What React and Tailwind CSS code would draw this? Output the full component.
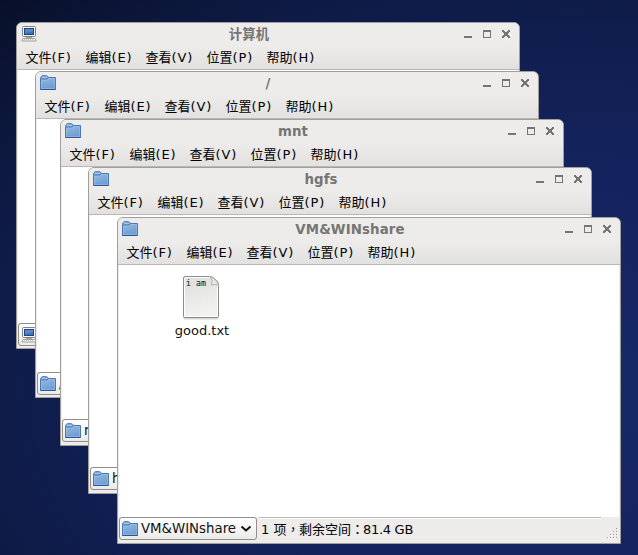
import React from "react";

function FolderIcon() {
  return (
    <svg width="18" height="18" viewBox="0 0 18 18" className="shrink-0">
      <defs>
        <linearGradient id="folder" x1="0" y1="0" x2="0.4" y2="1">
          <stop offset="0" stopColor="#97bae2" />
          <stop offset="1" stopColor="#6f9dd1" />
        </linearGradient>
      </defs>
      <path d="M1.500 6V3.200L3.300 1.500h4L9.500 3v3" fill="#7fa5d3" stroke="#5c88c0" />
      <path d="M3 3.500h5" stroke="#a9c5e6" />
      <path d="M1.500 15.500V5.500l1-.5h5.500L9.500 3.500h7v12z" fill="url(#folder)" stroke="#4a78b5" />
      <path d="M2.500 14.500V6.200h6L10 4.500h5.500v10z" fill="none" stroke="#b0cbea" strokeOpacity=".4" />
      <path d="M1.500 15.500h15" stroke="#2a5596" />
    </svg>
  );
}

function ComputerIcon() {
  return (
    <svg width="18" height="18" viewBox="0 0 18 18" className="shrink-0">
      <rect x="2.500" y="1.500" width="13" height="10" rx="1" fill="#f4f4f2" stroke="#80827d" />
      <rect x="4.500" y="3.500" width="9" height="6" fill="#3f70b3" stroke="#1c468a" />
      <path d="M5 4h8v2.500L5 8z" fill="#5a86c2" />
      <path d="M6 12.500h6" stroke="#a4a6a1" />
      <path d="M3 13.500h12l1 1.500v1h-14v-1z" fill="#f2f2f0" stroke="#a0a29d" />
      <path d="M4 14.500h10" stroke="#c4c6c1" strokeDasharray="1 1" />
    </svg>
  );
}

function WindowButtons() {
  return (
    <svg width="50" height="12" viewBox="0 0 50 12" className="shrink-0" shapeRendering="crispEdges" fill="#757573">
      <path d="M1 8h8v2H1z" />
      <path fillRule="evenodd" d="M20 2h8v8h-8zM21 4v5h6V4z" />
      <path d="M39 2h2v1h1v1h2V3h1V2h2v2h-1v1h-1v2h1v1h1v2h-2V9h-1V8h-2v1h-1v1h-2V8h1V7h1V5h-1V4h-1z" />
    </svg>
  );
}

const menus = [
  ["文件", "(F)", "w-[60px]"],
  ["编辑", "(E)", "w-[60px]"],
  ["查看", "(V)", "w-[61px]"],
  ["位置", "(P)", "w-[60px]"],
  ["帮助", "(H)", "w-[60px]"],
];

function Chevron() {
  return (
    <svg width="12" height="8" viewBox="0 0 12 8" className="ml-[4px] shrink-0">
      <path d="M1.500 1.500 6 5.500l4.500-4" fill="none" stroke="#111" strokeWidth="2" />
    </svg>
  );
}

function FileIcon() {
  return (
    <svg width="42" height="46" viewBox="0 0 42 46" className="ml-[8px] block">
      <defs>
        <linearGradient id="paper" x1="0" y1="0" x2="0.300" y2="1">
          <stop offset="0" stopColor="#dcdeda" />
          <stop offset="1" stopColor="#f2f2f0" />
        </linearGradient>
        <linearGradient id="fold" x1="0" y1="1" x2="1" y2="0">
          <stop offset="0" stopColor="#ffffff" />
          <stop offset="1" stopColor="#c9cac6" />
        </linearGradient>
      </defs>
      <path d="M3 42.500h36l-1 2H4z" fill="#000" opacity=".16" />
      <path d="M5 1.500h24.500Q33 1.500 36 5q2.500 2.500 2.500 5V41q0 1.500-1.500 1.500H5Q3.500 42.500 3.500 41V3Q3.500 1.500 5 1.500z" fill="url(#paper)" stroke="#8b8d88" />
      <path d="M5 2.500h25M4.500 3v38.500h33V10" fill="none" stroke="#fff" />
      <path d="M30 2q3.500 3.500 1.500 8 4-1.500 7 .5Q38 6.500 35 4.200 32.500 2 30 2z" fill="url(#fold)" stroke="#a5a6a2" strokeWidth=".8" />
      <text x="6" y="11" fontSize="8.300" fontFamily="DejaVu Sans Mono" fill="#111">i am</text>
    </svg>
  );
}

function Grip() {
  return (
    <svg width="12" height="12" viewBox="0 0 12 12" shapeRendering="crispEdges">
      {[[9, 0], [6, 3], [9, 3], [3, 6], [6, 6], [9, 6], [0, 9], [3, 9], [6, 9], [9, 9]].map(([x, y]) => (
        <g key={`${x}-${y}`}>
          <rect x={x + 1} y={y + 1} width="1" height="1" fill="#fff" />
          <rect x={x} y={y} width="1" height="1" fill="#999995" />
        </g>
      ))}
    </svg>
  );
}

function FileWindow({ place, title, label, computer, footer = "h-[26px]", status, children }) {
  const Icon = computer ? ComputerIcon : FolderIcon;
  return (
    <section className={`absolute ${place} flex h-[327px] w-[504px] flex-col overflow-hidden rounded-t-[6px] border border-[#a09f9b] bg-[#edeceb]`}>
      <div className="flex h-[47px] shrink-0 flex-col border-b border-[#b9b8b5] bg-linear-to-b from-[#edeceb] from-50% to-[#e2e1e0]">
        <div className="flex h-[22px] items-center pl-[3px] pr-[6px]">
          <Icon />
          <h1 className="min-w-0 flex-1 pt-[2px] pr-[3px] text-center text-[13.330px] leading-[22px] font-bold tracking-[0.120px] whitespace-nowrap text-[#757573]">{title}</h1>
          <WindowButtons />
        </div>
        <nav className="flex h-[24px] items-center pt-[2px] pl-[8.500px] text-[13px] leading-[24px] text-black">
          {menus.map(([name, key, width]) => (
            <span key={name} className={`${width} whitespace-nowrap`}>
              {name}<span className="tracking-[0.900px]">{key}</span>
            </span>
          ))}
        </nav>
      </div>
      <main className="mx-px flex-1 bg-white">{children}</main>
      <footer className={`flex ${footer} shrink-0 pl-px`}>
        <div className="flex h-[23px] w-[138px] shrink-0 items-center rounded-[3px] border border-[#8f8e8b] bg-linear-to-b from-white to-[#ebeae9] pl-px text-[13.330px] whitespace-nowrap text-[#111]">
          <Icon />
          <span className="ml-[2px]">{label}</span>
          <Chevron />
        </div>
        <div className="ml-[2px] h-[2px] w-[342px] border-t border-[#b9b8b5] bg-white">
          <p className="pl-[2px] text-[13px] leading-[22px] whitespace-nowrap text-black">{status}</p>
        </div>
        <div className="mt-[11px] ml-[6px]">
          <Grip />
        </div>
      </footer>
    </section>
  );
}

export default function App() {
  return (
    <div className="relative h-[555px] w-[638px] overflow-hidden bg-[#13215a] bg-[radial-gradient(ellipse_at_90%_70%,#172968_0%,#14235e_40%,#0e1b47_75%,#081029_100%)] font-['DejaVu_Sans','Noto_Sans_CJK_SC',sans-serif]">
      <FileWindow place="left-[16px] top-[22px]" title="计算机" label="计算机" footer="h-[25px]" computer />
      <FileWindow place="left-[35px] top-[71px]" title="/" label="/" footer="h-[25px]" />
      <FileWindow place="left-[60px] top-[119px]" title="mnt" label="mnt" />
      <FileWindow place="left-[88px] top-[167px]" title="hgfs" label="hgfs" />
      <FileWindow
        place="left-[117px] top-[217px]"
        title="VM&WINshare"
        label="VM&WINshare"
        status={
          <>
            1 项<span className="font-['Noto_Sans_CJK_TC',sans-serif] tracking-[-0.500px]">，</span>剩余空间
            <span className="font-['Noto_Sans_CJK_TC',sans-serif] tracking-[-1px]">：</span>
            <span className="tracking-[-0.300px]">81.4 </span>GB
          </>
        }
      >
        <figure className="ml-[53px] w-[60px] pt-[10px] text-center">
          <FileIcon />
          <figcaption className="pt-px text-[13px] leading-[18px] text-[#111]">good.txt</figcaption>
        </figure>
      </FileWindow>
    </div>
  );
}
